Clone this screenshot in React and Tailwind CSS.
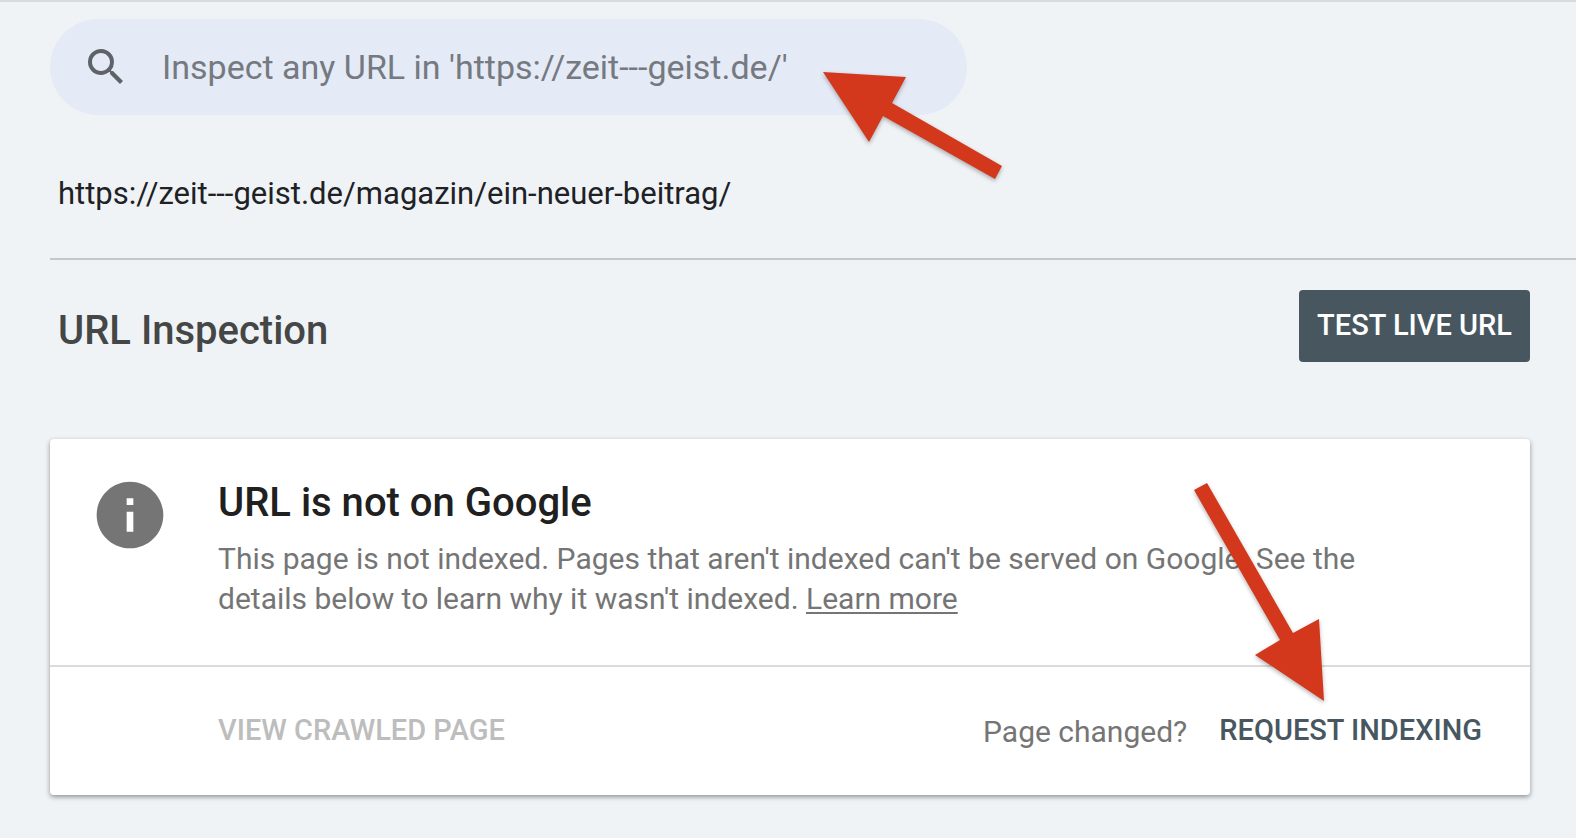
import { useState } from 'react'
import clsx from 'clsx'

const SITE = 'https://zeit---geist.de/'
const INSPECTED_URL = 'https://zeit---geist.de/magazin/ein-neuer-beitrag/'

export default function App() {
  const [query, setQuery] = useState('')

  return (
    <div className="min-h-screen border-t-2 border-[#d9dcdc] bg-[#eff3f6] pb-10 font-[Roboto,sans-serif]">
      {/* ── Search bar ── */}
      <header className="pt-[17px] pl-[50px]">
        <div className="relative w-full max-w-[917px]">
          <form
            role="search"
            onSubmit={e => e.preventDefault()}
            className="flex h-24 items-center gap-8 rounded-full bg-[#e5eaf7] px-8"
          >
            <label htmlFor="inspect" className="shrink-0">
              <SearchIcon className="size-12 text-[#5f6368]" />
            </label>
            <input
              id="inspect"
              type="text"
              aria-label="Inspect URL"
              value={query}
              onChange={e => setQuery(e.target.value)}
              placeholder={`Inspect any URL in '${SITE}'`}
              className="min-w-0 flex-1 bg-transparent text-[34px] text-[#202124] outline-none placeholder:text-[#757980]"
            />
          </form>
          <Arrow
            viewBox="0 0 184 112"
            points="2,2 85,7 71,33 181,96 174,109 62,46 48,72"
            className="absolute top-[51px] -right-[38px] h-28 w-46"
          />
        </div>
      </header>

      <p className="ml-[50px] border-b-2 border-[#c3c7ca] px-2 pt-[59px] pb-11 text-[31px] leading-10 text-[#202124]">
        {INSPECTED_URL}
      </p>

      <main className="pr-[46px] pl-[50px]">
        {/* ── Title row ── */}
        <div className="flex h-[102px] items-end justify-between pl-2">
          <h1 className="text-[40px] leading-[62px] font-medium text-[#444746]">URL Inspection</h1>
          <button
            type="button"
            className="h-[72px] rounded bg-[#48575f] px-[18px] text-[29px] font-medium text-white"
          >
            TEST LIVE URL
          </button>
        </div>

        {/* ── Result card ── */}
        <section className="relative mt-[77px] rounded bg-white shadow-[0_2px_5px_rgba(0,0,0,0.4)]">
          <div className="flex gap-12 border-b-2 border-[#dadcdc] pt-9 pr-12 pb-[46px] pl-10">
            <InfoIcon className="size-20 shrink-0 text-[#757575]" />
            <div>
              <h2 className="text-[40px] leading-[56px] font-medium text-[#202020]">
                URL is not on Google
              </h2>
              <p className="mt-2 max-w-[1160px] text-[30px] leading-10 text-[#757575]">
                This page is not indexed. Pages that aren't indexed can't be served on Google. See the
                details below to learn why it wasn't indexed.{' '}
                <a href="#learn-more" className="underline decoration-2 underline-offset-3">Learn more</a>
              </p>
            </div>
          </div>
          <div className="flex h-32 items-center pr-12 pl-[168px]">
            <CardButton disabled>VIEW CRAWLED PAGE</CardButton>
            <span className="mr-8 ml-auto text-[30px] text-[#757575]">Page changed?</span>
            <CardButton>REQUEST INDEXING</CardButton>
          </div>
          <Arrow
            viewBox="0 0 136 224"
            points="3,11 16,4 102,154 128,140 133,222 64,176 89,161"
            className="absolute right-[203px] bottom-[92px] h-56 w-34"
          />
        </section>
      </main>
    </div>
  )
}

function CardButton({ children, disabled }) {
  return (
    <button
      type="button"
      disabled={disabled}
      className={clsx('text-[29px] font-medium', disabled ? 'text-[#bdbdbd]' : 'text-[#48575f]')}
    >
      {children}
    </button>
  )
}

function Arrow({ points, viewBox, className }) {
  return (
    <svg
      viewBox={viewBox}
      aria-hidden="true"
      className={clsx('pointer-events-none overflow-visible drop-shadow-[0_2px_2px_rgba(0,0,0,0.3)]', className)}
    >
      <polygon points={points} fill="#d4381c" />
    </svg>
  )
}

function SearchIcon({ className }) {
  return (
    <svg viewBox="0 0 24 24" fill="currentColor" aria-hidden="true" className={className}>
      <path d="M15.5 14h-.79l-.28-.27A6.47 6.47 0 0 0 16 9.5 6.5 6.5 0 1 0 9.5 16c1.61 0 3.09-.59 4.23-1.57l.27.28v.79l5 4.99L20.49 19l-4.99-5zm-6 0C7.01 14 5 11.99 5 9.5S7.01 5 9.5 5 14 7.01 14 9.5 11.99 14 9.5 14z" />
    </svg>
  )
}

function InfoIcon({ className }) {
  return (
    <svg viewBox="0 0 24 24" fill="currentColor" aria-hidden="true" className={className}>
      <path d="M12 2C6.48 2 2 6.48 2 12s4.48 10 10 10 10-4.48 10-10S17.52 2 12 2zm1 15h-2v-6h2v6zm0-8h-2V7h2v2z" />
    </svg>
  )
}
